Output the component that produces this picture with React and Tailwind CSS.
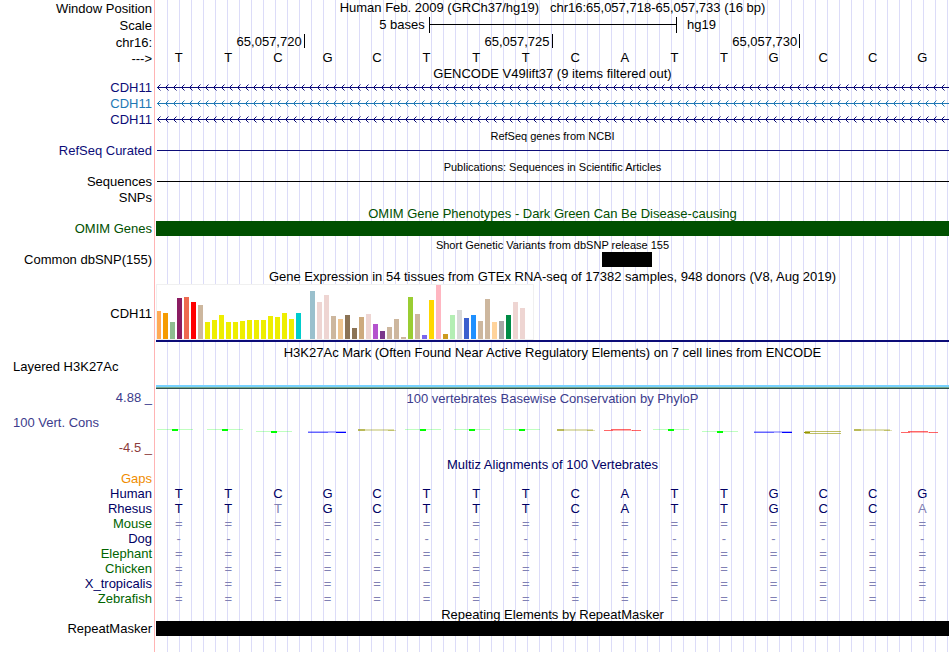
import React from "react";

const BASES = "TTCGCTTTCATTGCCG".split("");

const GTEX = [
  [28, "#ffaa56"], [26, "#f59b00"], [17, "#8fbc8f"], [41, "#8b1c62"], [42, "#ee6a50"], [37, "#ff0000"],
  [34, "#cdb79e"], [17, "#eeee00"], [19, "#eeee00"], [24, "#eeee00"], [17, "#eeee00"], [17, "#eeee00"],
  [18, "#eeee00"], [19, "#eeee00"], [19, "#eeee00"], [19, "#eeee00"], [23, "#eeee00"], [22, "#eeee00"],
  [26, "#eeee00"], [20, "#eeee00"], [26, "#00cdcd"], [0, "#ee82ee"], [48, "#9ac0cd"], [37, "#eed5d2"],
  [44, "#eed5d2"], [23, "#cdb79e"], [20, "#eec591"], [24, "#8b7355"], [11, "#8b7355"], [22, "#cdaa7d"],
  [25, "#eed5d2"], [15, "#b452cd"], [8, "#7a378b"], [12, "#cdb79e"], [20, "#cdb79e"], [2, "#cdb79e"],
  [42, "#9acd32"], [25, "#cdb79e"], [4, "#7a67ee"], [39, "#ffd700"], [55, "#ffb6c1"], [5, "#cd9b1d"],
  [24, "#b4eeb4"], [29, "#d9d9d9"], [21, "#3a5fcd"], [24, "#1e90ff"], [18, "#cdb79e"], [40, "#cdb79e"],
  [17, "#ffd39b"], [18, "#a6a6a6"], [24, "#008b45"], [37, "#eed5d2"], [31, "#eed5d2"], [0, "#ff00ff"],
];

// Conservation glyph per base: letter drawn and vertical offset
const LOGO = [
  ["T", 0], ["T", 0], ["T", 2], ["G", 2], ["C", 0], ["T", 0], ["T", 0], ["T", 0],
  ["C", 0], ["A", 0], ["T", 0], ["T", 2], ["G", 2], ["O", 2], ["C", 0], ["A", 2],
];

const SPECIES = [
  ["Human", "text-[#000064]", "TTCGCTTTCATTGCCG"],
  ["Rhesus", "text-[#000064]", "TTtGCTTTCATTGCCa"],
  ["Mouse", "text-[#006400]", "================"],
  ["Dog", "text-[#000064]", "----------------"],
  ["Elephant", "text-[#006400]", "================"],
  ["Chicken", "text-[#006400]", "================"],
  ["X_tropicalis", "text-[#000064]", "================"],
  ["Zebrafish", "text-[#006400]", "================"],
];

function Row({ label, h, labelClass = "", children }) {
  return (
    <div className={`flex items-center ${h}`}>
      <div className={`w-38 shrink-0 text-right whitespace-pre ${labelClass}`}>{label}</div>
      <div className="ml-1 min-w-0 flex-1 self-stretch">{children}</div>
    </div>
  );
}

function Title({ h, className = "", children }) {
  return (
    <Row h={h}>
      <h2 className={`flex h-full items-center justify-center whitespace-pre ${className}`}>{children}</h2>
    </Row>
  );
}

function GeneLine({ id, color }) {
  return (
    <svg className="block h-full w-full" aria-hidden="true" shapeRendering="crispEdges">
      <defs>
        <pattern id={id} width="8" height="16" patternUnits="userSpaceOnUse">
          <g fill={color}>
            <rect x="1" y="8" width="1" height="1" />
            <rect x="2" y="7" width="1" height="1" />
            <rect x="2" y="9" width="1" height="1" />
            <rect x="3" y="6" width="1" height="1" />
            <rect x="3" y="10" width="1" height="1" />
            <rect x="4" y="5" width="1" height="1" fillOpacity="0.5" />
            <rect x="4" y="11" width="1" height="1" fillOpacity="0.5" />
          </g>
        </pattern>
      </defs>
      <rect width="100%" height="16" fill={`url(#${id})`} />
      <rect x="1" y="8" width="100%" height="1" fill={color} />
    </svg>
  );
}

function Glyph({ kind, dy }) {
  return (
    <svg width="42" height="8" className="block overflow-visible" aria-hidden="true">
      <g transform={`translate(0 ${dy})`}>
        {kind === "T" && (
          <g shapeRendering="crispEdges">
            <rect x="1" y="1" width="36" height="1" fill="#00ff00" fillOpacity="0.25" />
            <rect x="16" y="1" width="6" height="2" fill="#00ff00" />
          </g>
        )}
        {kind === "G" && (
          <g shapeRendering="crispEdges" fill="#0000ff">
            <rect x="3" y="1" width="38" height="1" fillOpacity="0.3" />
            <rect x="3" y="2" width="20" height="1" fillOpacity="0.6" />
            <rect x="23" y="2" width="12" height="1" fillOpacity="0.3" />
            <rect x="31" y="2" width="10" height="1" />
          </g>
        )}
        {kind === "C" && (
          <g shapeRendering="crispEdges" fill="#969600">
            <rect x="4" y="1" width="36" height="1" fillOpacity="0.3" />
            <rect x="4" y="2" width="38" height="1" fillOpacity="0.3" />
            <rect x="4" y="1" width="7" height="2" fillOpacity="0.5" />
            <rect x="34" y="2" width="6" height="1" fillOpacity="0.4" />
          </g>
        )}
        {kind === "O" && (
          <g shapeRendering="crispEdges" fill="#969600">
            <rect x="5" y="1" width="36" height="1" fillOpacity="0.6" />
            <rect x="5" y="3" width="36" height="1" fillOpacity="0.6" />
            <rect x="4" y="2" width="6" height="1" />
          </g>
        )}
        {kind === "A" && (
          <g shapeRendering="crispEdges" fill="#ff0000">
            <rect x="2" y="2" width="9" height="1" fillOpacity="0.6" />
            <rect x="9" y="1" width="20" height="1" fillOpacity="0.6" />
            <rect x="11" y="2" width="20" height="1" fillOpacity="0.3" />
            <rect x="30" y="2" width="9" height="1" fillOpacity="0.6" />
          </g>
        )}
      </g>
    </svg>
  );
}

function Letters({ text, className = "" }) {
  return (
    <div className={`-ml-0.5 mr-0.5 grid h-full grid-cols-16 items-center text-center ${className}`}>
      {text.map((c, i) => (
        <span key={i} className={/[a-z=-]/.test(c) ? "text-[#8080b4]" : ""}>
          {c.toUpperCase()}
        </span>
      ))}
    </div>
  );
}

function Tick({ children }) {
  return (
    <div className="flex h-full justify-end pt-px">
      <div className="h-3.5 border-r border-black pr-0.5 leading-4">{children}</div>
    </div>
  );
}

export default function App() {
  return (
    <main className="flex bg-white pr-px font-['Liberation_Sans',Arial,sans-serif] text-[13px] leading-4 text-black">
      <div className="relative min-w-0 flex-1">
        <div className="absolute inset-y-0 right-0 left-[154px] flex" aria-hidden="true">
          <div className="mr-px w-px bg-[#ffb4b4]" />
          <div className="flex-1 bg-[repeating-linear-gradient(to_right,transparent_0_11px,#dcdcf8_11px_12px)]" />
        </div>

        <div className="relative pb-4">
          <Row h="h-4" label="Window Position" labelClass="pt-0.5">
            <h1 className="text-center whitespace-pre">
              {"Human Feb. 2009 (GRCh37/hg19)   chr16:65,057,718-65,057,733 (16 bp)"}
            </h1>
          </Row>
          <Row h="h-[17px]" label="Scale" labelClass="pt-0.5">
            <div className="flex h-full items-end">
              <div className="w-[34.4%] pr-1 text-right">5 bases</div>
              <div className="flex h-4 w-[31.3%] items-center border-x border-black">
                <div className="mb-px h-px w-full bg-black" />
              </div>
              <div className="pl-2.5">hg19</div>
            </div>
          </Row>
          <Row h="h-[17px]" label="chr16:" labelClass="pt-0.5">
            <div className="grid h-full grid-cols-[3fr_5fr_5fr_3fr] text-right">
              <Tick>65,057,720</Tick>
              <Tick>65,057,725</Tick>
              <Tick>65,057,730</Tick>
            </div>
          </Row>
          <Row h="h-[15px]" label="--->" labelClass="pt-0.5">
            <Letters text={BASES} className="pb-0.5" />
          </Row>
          <Title h="h-3.5" className="pt-1">GENCODE V49lift37 (9 items filtered out)</Title>
          <Row h="h-4" label="CDH11" labelClass="pt-0.5 text-[#0c0c78]">
            <GeneLine id="gene-a" color="#0c0c78" />
          </Row>
          <Row h="h-4" label="CDH11" labelClass="pt-0.5 text-[#1e78b4]">
            <GeneLine id="gene-b" color="#1e78b4" />
          </Row>
          <Row h="h-4" label="CDH11" labelClass="pt-0.5 text-[#0c0c78]">
            <GeneLine id="gene-c" color="#0c0c78" />
          </Row>
          <Title h="h-4" className="pt-0.5 text-[11px]">RefSeq genes from NCBI</Title>
          <Row h="h-[15px]" label="RefSeq Curated" labelClass="text-[#0c0c78]">
            <div className="flex h-full items-center pl-px">
              <div className="h-px w-full bg-[#0c0c78]" />
            </div>
          </Row>
          <Title h="h-4" className="pt-0.5 text-[11px]">Publications: Sequences in Scientific Articles</Title>
          <Row h="h-[15px]" label="Sequences">
            <div className="flex h-full items-center pl-px">
              <div className="h-px w-full bg-black" />
            </div>
          </Row>
          <Row h="h-4" label="SNPs" labelClass="pt-0.5" />
          <Title h="h-4" className="pt-0.5 text-[#005000]">OMIM Gene Phenotypes - Dark Green Can Be Disease-causing</Title>
          <Row h="h-[15px]" label="OMIM Genes" labelClass="text-[#005000]">
            <div className="h-full bg-[#005000]" />
          </Row>
          <Title h="h-4" className="pt-0.5 text-[11px]">Short Genetic Variants from dbSNP release 155</Title>
          <Row h="h-[15px]" label="Common dbSNP(155)">
            <div className="ml-[56.25%] h-full w-[6.3%] bg-black" />
          </Row>
          <Title h="h-[17px]" className="pt-0.5">
            Gene Expression in 54 tissues from GTEx RNA-seq of 17382 samples, 948 donors (V8, Aug 2019)
          </Title>
          <Row h="h-[58px]" label="CDH11" labelClass="pt-0.5">
            <div className="flex h-14 items-end">
              <div className="flex h-full items-end border-b border-[#dcdcdc] bg-white outline -outline-offset-1 outline-[#f0f0f0]">
                {GTEX.map(([v, color], i) => (
                  <div key={i} className="mr-0.5 w-[5px]" style={{ height: v, backgroundColor: color }} />
                ))}
              </div>
            </div>
            <div className="h-0.5 bg-[#0c0c78]" />
          </Row>

          <div className="flex h-[47px]">
            <div className="w-38 shrink-0 pt-[17px] pl-[13px]">Layered H3K27Ac</div>
            <div className="ml-1 flex min-w-0 flex-1 flex-col justify-between">
              <h2 className="pt-[3px] text-center">
                H3K27Ac Mark (Often Found Near Active Regulatory Elements) on 7 cell lines from ENCODE
              </h2>
              <div className="border-b border-[#325050]">
                <div className="h-[3px] border-b border-[#78aa8c] bg-[#78d2ff]" />
              </div>
            </div>
          </div>

          <div className="flex h-[67px]">
            <div className="flex w-38 shrink-0 flex-col justify-between pt-px text-right">
              <div className="text-[#3c3c8c]">4.88 _</div>
              <div className="pl-[13px] text-left text-[#3c3c8c]">100 Vert. Cons</div>
              <div className="text-[#8c3c3c]">-4.5 _</div>
            </div>
            <div className="ml-1 min-w-0 flex-1">
              <h2 className="pt-0.5 text-center text-[#3c3c8c]">100 vertebrates Basewise Conservation by PhyloP</h2>
              <div className="grid grid-cols-16 pt-[21px]">
                {LOGO.map(([kind, dy], i) => (
                  <Glyph key={i} kind={kind} dy={dy} />
                ))}
              </div>
            </div>
          </div>

          <Title h="h-[15px]" className="pt-0.5 text-[#000064]">Multiz Alignments of 100 Vertebrates</Title>
          <Row h="h-[15px]" label="Gaps" labelClass="text-[#f08c00]" />
          {SPECIES.map(([name, color, seq]) => (
            <Row key={name} h="h-[15px]" label={name} labelClass={color}>
              <Letters text={seq.split("")} className="text-[#000064]" />
            </Row>
          ))}
          <Title h="h-[15px]" className="pt-0.5">Repeating Elements by RepeatMasker</Title>
          <Row h="h-[15px]" label="RepeatMasker">
            <div className="h-full bg-black" />
          </Row>
        </div>
      </div>
    </main>
  );
}
